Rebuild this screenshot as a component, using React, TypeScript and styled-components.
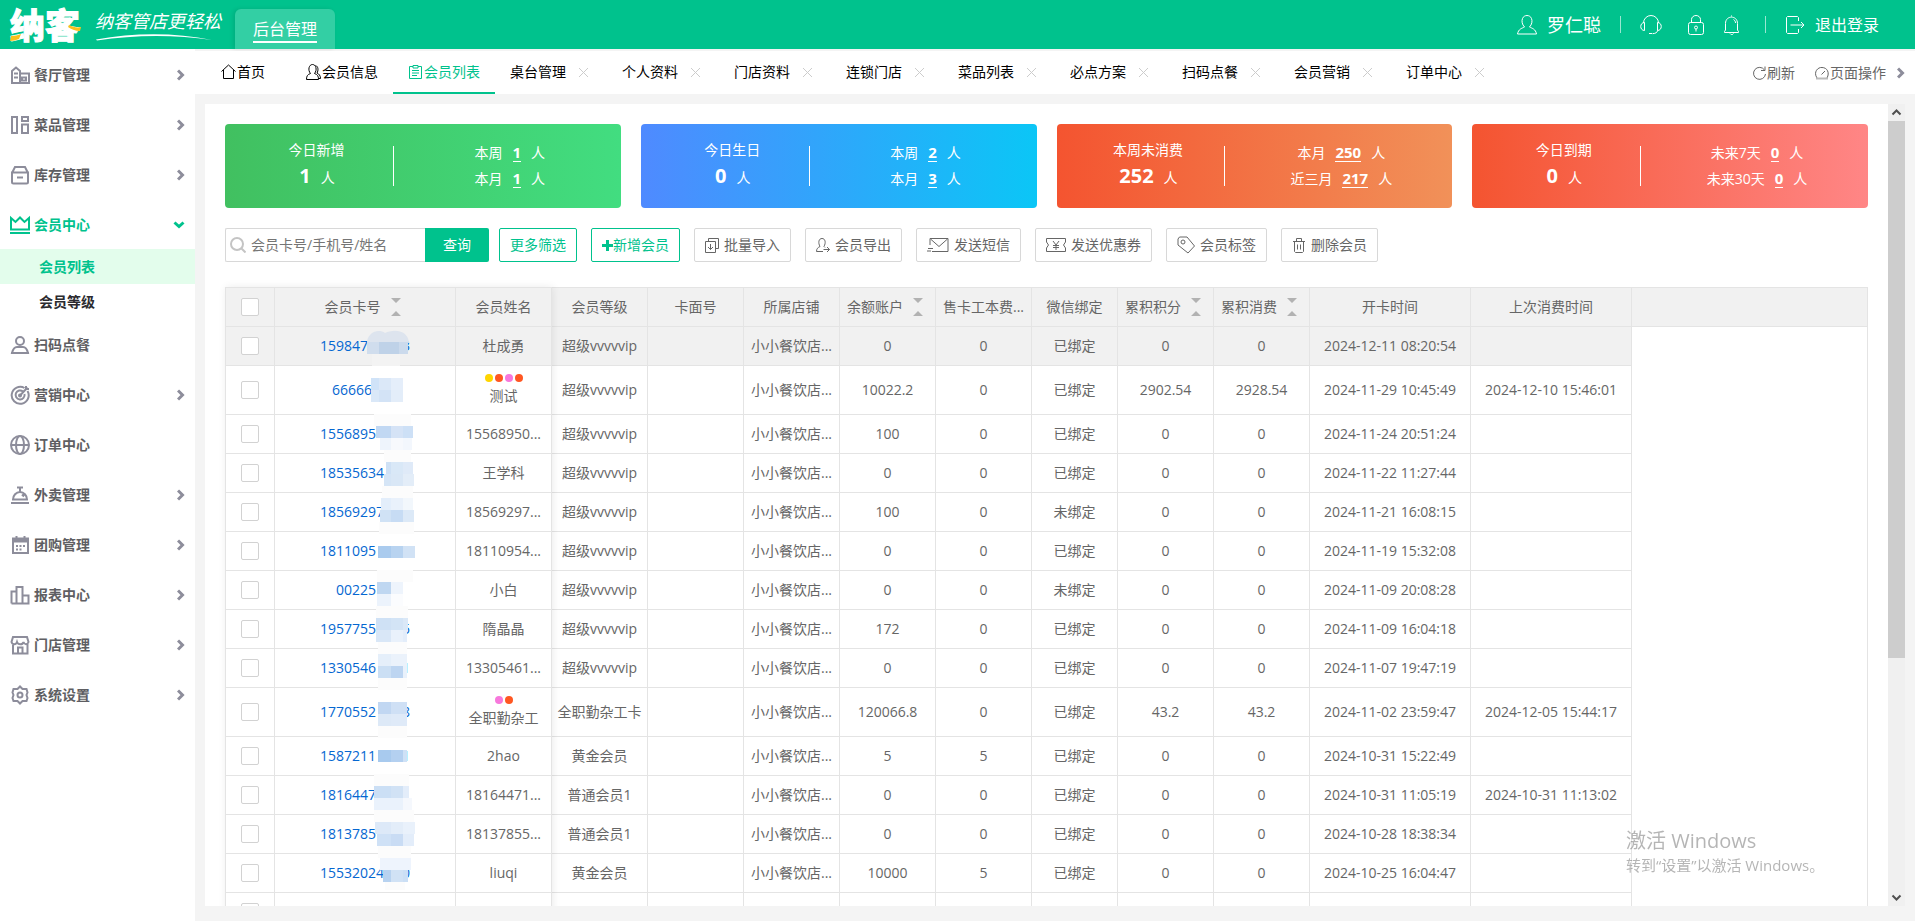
import React from "react";
import styled, { createGlobalStyle, css } from "styled-components";

const GREEN = "#00c28d";
const LINE = "#e4e4e4";

const GlobalStyle = createGlobalStyle`
  *, *::before, *::after { box-sizing: border-box; }
  body {
    margin: 0;
    background: #f4f4f4;
    color: #666;
    font: 14px/20px "Open Sans", "Noto Sans CJK SC", sans-serif;
  }
  button, input { font: inherit; color: inherit; }
  button { cursor: pointer; }
  a { color: inherit; text-decoration: none; }
`;

/* ---------- frame ---------- */

const Page = styled.div`
  display: flex;
  flex-direction: column;
  height: 100vh;
  overflow: hidden;
`;

const Header = styled.header`
  display: flex;
  flex: none;
  height: 49px;
  background: ${GREEN};
  color: #fff;
`;

const Body = styled.div`
  display: flex;
  flex: 1;
  min-height: 0;
`;

const Main = styled.main`
  display: flex;
  flex: 1;
  flex-direction: column;
  min-width: 0;
  padding: 2px 0 15px;
`;

/* ---------- header ---------- */

const Brand = styled.div`
  display: flex;
  align-items: center;
  width: 235px;
  padding-left: 10px;
`;

const LogoBox = styled.div`
  position: relative;
  width: 72px;
  height: 49px;
  font-size: 35px;
  font-weight: 900;
  line-height: 52px;
  white-space: nowrap;
  -webkit-text-stroke: 1px #fff;
  svg { position: absolute; left: 0; top: 0; }
`;

const Slogan = styled.div`
  display: flex;
  flex-direction: column;
  padding: 0 0 0 13px;
  font-size: 18px;
  font-style: italic;
  line-height: 24px;
`;

const HeaderTab = styled.button`
  align-self: flex-end;
  display: flex;
  justify-content: center;
  width: 100px;
  height: 40px;
  padding: 6px 0 0;
  border: 0;
  border-radius: 6px 6px 0 0;
  background: #33cfa4;
  box-shadow: -2px 0 4px rgba(0, 0, 0, 0.1);
  color: #fff;
  font-size: 16px;
  span {
    height: 28px;
    line-height: 28px;
    border-bottom: 2px solid #fff;
  }
`;

const HeaderTools = styled.div`
  display: flex;
  align-items: center;
  margin-left: auto;
  padding-right: 36px;
  svg { display: block; }
`;

const ToolLink = styled.a<{ $large?: boolean }>`
  display: flex;
  align-items: center;
  gap: 10px;
  font-size: ${(p) => (p.$large ? 18 : 16)}px;
`;

const IconGroup = styled.div`
  display: flex;
  align-items: center;
  gap: 20px;
  padding-right: 6px;
`;

const IconButton = styled.button`
  display: flex;
  padding: 0;
  border: 0;
  background: none;
  color: inherit;
`;

const Divider = styled.i`
  width: 1px;
  height: 17px;
  margin: 0 19px;
  background: rgba(255, 255, 255, 0.6);
`;

/* ---------- side menu ---------- */

const Sidebar = styled.nav`
  flex: none;
  width: 195px;
  background: #fff;
`;

const MenuItem = styled.a<{ $active?: boolean }>`
  display: flex;
  align-items: center;
  height: 50px;
  padding: 1px 10px 0;
  gap: 4px;
  font-weight: 700;
  color: ${(p) => (p.$active ? GREEN : "#5e5e62")};
  svg { flex: none; color: ${(p) => (p.$active ? GREEN : "#8d8d9b")}; }
  svg:last-child { margin-left: auto; }
`;

const SubItem = styled.a<{ $active?: boolean }>`
  display: flex;
  align-items: center;
  height: 35px;
  padding-left: 39px;
  font-weight: 700;
  background: ${(p) => (p.$active ? "#e3fdec" : "#fff")};
  color: ${(p) => (p.$active ? GREEN : "#2b2b2f")};
`;

/* ---------- tab bar ---------- */

const TabBar = styled.div`
  display: flex;
  flex: none;
  height: 43px;
  padding: 0 10px 0 11px;
  background: #fff;
`;

const Tab = styled.div<{ $active?: boolean; $home?: boolean }>`
  display: flex;
  align-items: center;
  padding: 0 15px;
  margin-right: ${(p) => (p.$home ? 11 : 0)}px;
  color: ${(p) => (p.$active ? GREEN : "#000")};
  border-bottom: 2px solid ${(p) => (p.$active ? GREEN : "transparent")};
  a { display: flex; align-items: center; gap: 1px; }
`;

const CloseButton = styled.button`
  display: flex;
  margin: 2px 3px 0 12px;
  padding: 0;
  border: 0;
  background: none;
  color: #ccc;
`;

const TabTools = styled.div`
  display: flex;
  align-items: center;
  gap: 20px;
  margin-left: auto;
`;

const TabTool = styled.button`
  display: flex;
  align-items: center;
  gap: 1px;
  padding: 0;
  border: 0;
  background: none;
  &:last-child { margin-left: -9px; color: #8d8d9b; }
`;

/* ---------- content ---------- */

const Content = styled.section`
  display: flex;
  flex: 1;
  min-height: 0;
  margin: 10px 10px 0;
  background: #fff;
`;

const ContentScroll = styled.div`
  flex: 1;
  min-width: 0;
  padding: 20px 20px 0;
  overflow: hidden;
`;

const ScrollRail = styled.div`
  display: flex;
  flex: none;
  flex-direction: column;
  width: 17px;
  background: #f0f0f0;
  color: #505050;
  svg { flex: none; display: block; }
`;

const ScrollSpace = styled.div`
  flex: 1;
`;

const ScrollThumb = styled.div`
  height: 67%;
  background: #cdcdcd;
`;

const Stats = styled.div`
  display: grid;
  grid-template-columns: repeat(4, 1fr);
  gap: 20px;
`;

const StatCard = styled.article<{ $from: string; $to: string }>`
  display: grid;
  grid-template-columns: 153fr 228fr;
  align-items: center;
  height: 84px;
  padding-left: 15px;
  border-radius: 4px;
  background: linear-gradient(90deg, ${(p) => p.$from}, ${(p) => p.$to});
  color: #fff;
  text-align: center;
`;

const StatMain = styled.div`
  height: 58px;
  line-height: 26px;
`;

const StatTotal = styled.div`
  padding-left: 1px;
  line-height: 26px;
  strong { margin-right: 10px; font-size: 20px; }
`;

const StatSide = styled.div`
  position: relative;
  padding-left: 6px;
  &::before {
    content: "";
    position: absolute;
    left: 0;
    top: 6px;
    width: 1px;
    height: 40px;
    background: #fff;
  }
`;

const StatLine = styled.div`
  display: flex;
  justify-content: center;
  align-items: center;
  gap: 10px;
  height: 26px;
  strong {
    height: 18px;
    border-bottom: 1px solid #fff;
    font-size: 15px;
    line-height: 16px;
  }
`;

const Toolbar = styled.div`
  display: flex;
  gap: 14px;
  margin: 20px 0 25px;
`;

const SearchForm = styled.form`
  display: flex;
  width: 264px;
  height: 34px;
  margin-right: -4px;
`;

const SearchBox = styled.label`
  display: flex;
  align-items: center;
  width: 200px;
  padding-left: 4px;
  gap: 5px;
  border: 1px solid #d8d8d8;
  border-right: 0;
  border-radius: 2px 0 0 2px;
  svg { flex: none; color: #c4c4c4; }
  input {
    min-width: 0;
    width: 100%;
    padding: 0;
    border: 0;
    outline: 0;
    background: none;
  }
  input::placeholder { color: #757575; }
`;

const SearchButton = styled.button`
  width: 64px;
  border: 0;
  border-radius: 0 2px 2px 0;
  background: ${GREEN};
  color: #fff;
`;

const ToolButton = styled.button<{ $accent?: boolean }>`
  display: flex;
  align-items: center;
  height: 34px;
  padding: 0 10px;
  gap: ${(p) => (p.$accent ? 0 : 5)}px;
  border: 1px solid ${(p) => (p.$accent ? GREEN : "#d8d8d8")};
  border-radius: 2px;
  background: #fff;
  color: ${(p) => (p.$accent ? GREEN : "#666")};
  white-space: nowrap;
`;

/* ---------- member table ---------- */

const TableFrame = styled.div`
  position: relative;
  border: solid ${LINE};
  border-width: 1px 0 0 1px;
`;

const PinnedShadow = styled.div`
  position: absolute;
  inset: -1px auto 0 -1px;
  width: 327px;
  box-shadow: 1px 0 8px rgba(0, 0, 0, 0.08);
  pointer-events: none;
`;

const Table = styled.table`
  width: 100%;
  table-layout: fixed;
  border-collapse: separate;
  border-spacing: 0;
  text-align: center;
`;

const cell = css`
  padding: 0;
  border: solid ${LINE};
  border-width: 0 1px 1px 0;
  white-space: nowrap;
`;

const Th = styled.th`
  ${cell}
  height: 39px;
  background: #f1f1f1;
  font-weight: 400;
`;

const HeadLabel = styled.div<{ $sortable?: boolean }>`
  display: flex;
  align-items: center;
  justify-content: center;
  gap: 10px;
  padding-right: ${(p) => (p.$sortable ? 5 : 0)}px;
`;

const Tr = styled.tr<{ $tall?: boolean; $hover?: boolean }>`
  height: ${(p) => (p.$tall ? 49 : 39)}px;
  td:not(:last-child) { background: ${(p) => (p.$hover ? "#f1f1f1" : "#fff")}; }
`;

const Td = styled.td`
  ${cell}
  position: relative;
`;

const RestTd = styled.td`
  padding: 0;
  border-right: 1px solid ${LINE};
`;

const CheckBox = styled.input`
  display: block;
  width: 18px;
  height: 18px;
  margin: 0 auto;
  appearance: none;
  border: 1px solid #d2d2d2;
  border-radius: 2px;
  background: #fff;
`;

const CardLink = styled.a<{ $digits: number }>`
  display: flex;
  justify-content: space-between;
  width: ${(p) => p.$digits * 8 + 2}px;
  margin: 0 auto;
  color: #0567d1;
`;

const Mosaic = styled.svg`
  position: absolute;
  left: 0;
  top: 0;
  z-index: 1;
  overflow: visible;
`;

const Tags = styled.div`
  display: flex;
  justify-content: center;
  gap: 2px;
  padding-bottom: 4px;
`;

const Tag = styled.i<{ $color: string }>`
  width: 8px;
  height: 8px;
  border-radius: 50%;
  background: ${(p) => p.$color};
`;

const Watermark = styled.div`
  position: fixed;
  right: 89px;
  bottom: 44px;
  z-index: 2;
  width: 200px;
  color: rgba(120, 120, 120, 0.55);
  font-size: 15px;
  line-height: 24px;
  white-space: nowrap;
  pointer-events: none;
  div:first-child { font-size: 20px; }
`;

/* ---------- icons ---------- */

type IconProps = { w: number; h?: number; box: string; sw?: number; children: React.ReactNode };

const Icon = ({ w, h = w, box, sw = 1, children }: IconProps) => (
  <svg width={w} height={h} viewBox={box} fill="none" stroke="currentColor" strokeWidth={sw} aria-hidden="true">
    {children}
  </svg>
);

const menuShapes: Record<string, React.ReactNode> = {
  building: <><path d="M2 18V6l4-3.500 4 3.500v12M1 18h18V8.500h-9M4 8.500h4M4 12.500h4" /><path d="M12 12.500h4v3h-4z" /></>,
  layout: <path d="M2 2h5v16H2zM12 2h6v4h-6zM12 9.500h6V18h-6z" />,
  box: <path d="M2 7.500h16V17a1.500 1.500 0 0 1-1.500 1.500h-13A1.500 1.500 0 0 1 2 17zM2.500 7L5 2h10l2.500 5M7 12.500h6" />,
  crown: <path d="M1 14.500V3l4.500 4L10 2.500 14.500 7 19 3v11.500zM0 18h20" />,
  user: <><circle cx="10" cy="6" r="4" /><path d="M2 18c1-4 3-6 5-6h6c2 0 4 2 5 6zM1 18h18" /></>,
  target: <><path d="M17.500 6A8.500 8.500 0 1 1 14.500 3" /><path d="M13 6.500A4.500 4.500 0 1 0 14.500 9M10 10.500l7.500-8M16 1v3h3" /><circle cx="10" cy="10.500" r="1" /></>,
  globe: <><circle cx="10" cy="10" r="9" /><ellipse cx="10" cy="10" rx="4" ry="9" /><path d="M1 10h18" /></>,
  dish: <path d="M3 14.500a7 7.500 0 0 1 14 0zM1 18h18M7 2.500h6M10 3v4M12 9.500l2 2" />,
  calendar: <><path d="M3 3.500h15V18H3zM3 6.500h15M3 5h15M6.500 1v3M14.500 1v3" /><path d="M6 11h2M9.500 11h2M13 11h2M6 14.500h2M9.500 14.500h2" /></>,
  chart: <path d="M1.500 18.500V6.500h5M6.500 18.500V2h6v16.500M12.500 10.500h6v8h-17" />,
  shop: <path d="M3 9v9.500h14.500V9M3 2h14l1.500 5c-1 3-4 3-5 0-.5 3-5.500 3-6.500 0-1 3-4.500 3-5.500 0zM8 18v-5.500h4.500V18" />,
  gear: <><path d="M7.500 4L10 1.500 12.500 4h4l1 3.500-1 2.500 1 3-1 3h-4L10 18.500 7.500 16h-4l-1-3 1-3-1-2.500 1-3.500z" /><circle cx="10" cy="10" r="2.500" /></>,
};

const MenuIcon = ({ name }: { name: string }) => <Icon w={20} box="0 0 20 20" sw={2}>{menuShapes[name]}</Icon>;
const Right = () => <Icon w={8} h={12} box="0 0 8 12" sw={3}><path d="M1 1.500L5.500 6 1 10.500" /></Icon>;
const Down = () => <Icon w={12} h={8} box="0 0 12 8" sw={3}><path d="M1.500 1.500L6 5.500l4.500-4" /></Icon>;

const SortMark = () => (
  <svg width="10" height="18" viewBox="0 0 10 18" fill="#b2b2b2" aria-hidden="true">
    <path d="M0 0h10L5 5zM0 18h10L5 13z" />
  </svg>
);

/* ---------- data ---------- */

const menuTop = [["building", "餐厅管理"], ["layout", "菜品管理"], ["box", "库存管理"]];
const menuRest: [string, string, boolean][] = [
  ["user", "扫码点餐", false], ["target", "营销中心", true], ["globe", "订单中心", false], ["dish", "外卖管理", true],
  ["calendar", "团购管理", true], ["chart", "报表中心", true], ["shop", "门店管理", true], ["gear", "系统设置", true],
];

const openTabs = ["桌台管理", "个人资料", "门店资料", "连锁门店", "菜品列表", "必点方案", "扫码点餐", "会员营销", "订单中心"];

const stats = [
  { from: "#41c060", to: "#42dd80", title: "今日新增", total: 1, lines: [["本周", 1], ["本月", 1]] },
  { from: "#4f8aff", to: "#0bc6f6", title: "今日生日", total: 0, lines: [["本周", 2], ["本月", 3]] },
  { from: "#f45430", to: "#f19159", title: "本周未消费", total: 252, lines: [["本月", 250], ["近三月", 217]] },
  { from: "#f45430", to: "#ff8686", title: "今日到期", total: 0, lines: [["未来7天", 0], ["未来30天", 0]] },
];

const tools: [string, React.ReactNode][] = [
  ["批量导入", <Icon w={14} h={15} box="0 0 14 15"><path d="M3.500 3V.5h10v10H11M.5 3.500h10v11H.5zM5.500 6v5.500M3 9l2.500 2.500L8 9" /></Icon>],
  ["会员导出", <Icon w={14} h={15} box="0 0 14 15"><path d="M7 13.500H.5c0-3 1.500-4 3.500-5C2 5 2.500.5 6 .5s4 4.500 2 8l1 1M7.500 11.500h6M11 9l2.500 2.500L11 14" /></Icon>],
  ["发送短信", <Icon w={22} h={16} box="0 0 22 16"><path d="M3 8V1.500h18v13H5M3.500 2L12 9.500 20.500 2M1 11.500h5M0 14h4" /></Icon>],
  ["发送优惠券", <Icon w={20} h={14} box="0 0 20 14"><path d="M.5.500h19V4l-2 3 2 3v3.500H.5V10l2-3-2-3zM7 3l3 4 3-4M10 7v5M7 7.500h6M7 9.500h6" /></Icon>],
  ["会员标签", <Icon w={18} h={18} box="0 0 18 18"><path d="M1 3l1.500-2h7.500l7.500 9-6.500 7L1 9z" /><circle cx="6" cy="6" r="2" /></Icon>],
  ["删除会员", <Icon w={14} h={15} box="0 0 14 15"><path d="M1 3.500h12M4.500 3V.5h5V3M2.500 4v9.500l1 1h7l1-1V4M5.500 6.500v5M8.500 6.500v5" /></Icon>],
];

const columns: [string, number, boolean?][] = [
  ["会员卡号", 181, true], ["会员姓名", 96], ["会员等级", 96], ["卡面号", 96], ["所属店铺", 96], ["余额账户", 96, true],
  ["售卡工本费...", 96], ["微信绑定", 86], ["累积积分", 96, true], ["累积消费", 96, true], ["开卡时间", 161], ["上次消费时间", 161],
];

type Block = [x: number, y: number, w: number, h: number, fill: string];
type Member = {
  card: string; tail?: string; digits?: number; name: string; tags?: string[]; level: string; balance: string;
  fee?: string; bound?: string; points?: string; spent?: string; opened: string; last?: string; blocks: Block[];
};

const VIP = "超级vvvvvip";
const PALE = "#fcfcfc";

const members: Member[] = [
  { card: "159847", tail: "3", name: "杜成勇", level: VIP, balance: "0", opened: "2024-12-11 08:20:54",
    blocks: [[97, 27, 28, 12, "#f3f3f3"], [92, 15, 12, 12, "#d0dded"], [104, 15, 20, 12, "#bfd2e8"], [124, 15, 9, 12, "#cbdaec"]] },
  { card: "66666", digits: 8, name: "测试", tags: ["#ffd500", "#ff5722", "#f778dc", "#ff5722"], level: VIP, balance: "10022.2",
    points: "2902.54", spent: "2928.54", opened: "2024-11-29 10:45:49", last: "2024-12-10 15:46:01",
    blocks: [[96, 12, 8, 12, "#d0e3f8"], [104, 12, 12, 12, "#dbe8f8"], [116, 12, 12, 12, "#e5eefa"], [96, 24, 8, 12, "#dae8f8"], [104, 24, 12, 12, "#d3e3f6"], [116, 24, 12, 12, "#e3edf9"], [99, 48, 37, 12, PALE]] },
  { card: "1556895", name: "15568950...", level: VIP, balance: "100", opened: "2024-11-24 20:51:24",
    blocks: [[101, 11, 15, 12, "#c1d8f3"], [116, 11, 12, 12, "#d5e3f6"], [128, 11, 10, 12, "#cde0f6"], [105, 23, 11, 12, "#eef4fc"], [116, 23, 12, 12, "#f7f9fd"], [128, 23, 9, 12, "#f3f7fd"], [109, 35, 27, 12, PALE]] },
  { card: "18535634", name: "王学科", level: VIP, balance: "0", opened: "2024-11-22 11:27:44",
    blocks: [[111, 8, 5, 12, "#cfe1f5"], [116, 8, 12, 12, "#d9e8f7"], [128, 8, 10, 12, "#dfeaf8"], [109, 20, 7, 12, "#d5e5f6"], [116, 20, 12, 12, "#d9e7f6"], [128, 20, 11, 12, "#e3edf8"], [107, 32, 31, 12, PALE]] },
  { card: "18569297", name: "18569297...", level: VIP, balance: "100", bound: "未绑定", opened: "2024-11-21 16:08:15",
    blocks: [[106, 5, 10, 12, "#e3eefb"], [116, 5, 12, 12, "#e9f1fb"], [128, 5, 10, 12, "#f2f7fc"], [105, 17, 11, 12, "#d0e2f5"], [116, 17, 12, 12, "#c7dcf4"], [128, 17, 11, 12, "#dce9f7"], [104, 29, 35, 12, PALE]] },
  { card: "1811095", name: "18110954...", level: VIP, balance: "0", opened: "2024-11-19 15:32:08",
    blocks: [[103, 14, 13, 12, "#aacbee"], [116, 14, 12, 12, "#b8d3f0"], [128, 14, 12, 12, "#d1e2f5"], [102, 38, 36, 12, PALE]] },
  { card: "00225", digits: 7, name: "小白", level: VIP, balance: "0", bound: "未绑定", opened: "2024-11-09 20:08:28",
    blocks: [[102, 11, 14, 12, "#bfd7f1"], [116, 11, 12, 12, "#eef4fc"], [102, 23, 14, 12, "#ecf3fc"], [116, 23, 12, 12, "#fbfcfe"], [101, 35, 32, 12, PALE]] },
  { card: "1957755", tail: "5", name: "隋晶晶", level: VIP, balance: "172", opened: "2024-11-09 16:04:18",
    blocks: [[101, 8, 15, 12, "#cfe1f5"], [116, 8, 12, 12, "#d3e4f6"], [128, 8, 5, 12, "#dae8f7"], [101, 20, 15, 12, "#d9e7f7"], [116, 20, 12, 12, "#e9f1fb"], [128, 20, 4, 12, "#e3edfa"], [103, 32, 29, 12, PALE]] },
  { card: "1330546", tail: "1", name: "13305461...", level: VIP, balance: "0", opened: "2024-11-07 19:47:19",
    blocks: [[103, 5, 13, 12, "#e5effa"], [116, 5, 16, 12, "#ebf2fb"], [103, 17, 13, 12, "#cbdff4"], [116, 17, 12, 12, "#bdd5f1"], [128, 17, 4, 12, "#e9f1fb"], [103, 29, 29, 12, PALE]] },
  { card: "1770552", tail: "8", name: "全职勤杂工", tags: ["#f778dc", "#ff5722"], level: "全职勤杂工卡", balance: "120066.8",
    points: "43.2", spent: "43.2", opened: "2024-11-02 23:59:47", last: "2024-12-05 15:44:17",
    blocks: [[103, 14, 13, 12, "#c1d7f2"], [116, 14, 16, 12, "#cfe0f5"], [103, 26, 13, 12, "#dde9f7"], [116, 26, 16, 12, "#dfeaf8"], [103, 38, 29, 12, PALE]] },
  { card: "1587211", tail: "1", name: "2hao", level: "黄金会员", balance: "5", fee: "5", opened: "2024-10-31 15:22:49",
    blocks: [[103, 13, 13, 12, "#a8caee"], [116, 13, 12, 12, "#b4d0f0"], [128, 13, 4, 12, "#cfe1f6"], [99, 37, 35, 12, PALE]] },
  { card: "1816447", name: "18164471...", level: "普通会员1", balance: "0", opened: "2024-10-31 11:05:19", last: "2024-10-31 11:13:02",
    blocks: [[99, 10, 17, 12, "#cbdff5"], [116, 10, 12, 12, "#d1e2f5"], [128, 10, 6, 12, "#e3edfa"], [99, 22, 29, 12, "#eaf2fc"], [128, 22, 9, 12, "#f5f8fd"], [99, 34, 40, 12, PALE]] },
  { card: "1813785", name: "18137855...", level: "普通会员1", balance: "0", opened: "2024-10-28 18:38:34",
    blocks: [[100, 7, 16, 12, "#dde9f8"], [116, 7, 12, 12, "#e3edf9"], [128, 7, 12, 12, "#e9f1fb"], [102, 19, 14, 12, "#cfe1f6"], [116, 19, 12, 12, "#c9dcf4"], [128, 19, 11, 12, "#e3edfa"], [103, 31, 33, 12, PALE]] },
  { card: "15532024", tail: "0", name: "liuqi", level: "黄金会员", balance: "10000", fee: "5", opened: "2024-10-25 16:04:47",
    blocks: [[105, 4, 31, 12, "#eef4fd"], [108, 16, 8, 12, "#b7d2f0"], [116, 16, 12, 12, "#d1e2f5"], [128, 16, 5, 12, "#cbdff5"], [110, 28, 20, 8, PALE]] },
];

/* ---------- parts ---------- */

const TopHeader = () => (
  <Header>
    <Brand>
      <LogoBox>
        纳客
        <svg width="72" height="49" viewBox="0 0 72 49" fill="#f9c11c" aria-hidden="true">
          <path d="M1 36c4 0 7-1 10-2l-2 5c-3 1-6 2-9 2zM59 25c4 2 8 3 12 2l-1 4c-5 0-9-2-12-4z" />
        </svg>
      </LogoBox>
      <Slogan>
        纳客管店更轻松
        <svg width="118" height="8" viewBox="0 0 118 8" fill="#fff" aria-hidden="true">
          <path d="M1 6.500C40-.5 80-.5 117 7 80 1.500 40 1.500 2 7.500z" />
        </svg>
      </Slogan>
    </Brand>
    <HeaderTab type="button"><span>后台管理</span></HeaderTab>
    <HeaderTools>
      <ToolLink href="#user" $large>
        <Icon w={20} box="0 0 20 20"><path d="M7.500 12C5 9.500 4.500 6 5.500 3.500c1.500-4 7.500-4 9 0 1 2.500.5 6-2 8.500 3 1.500 6 2 7 7H.5c1-5 4-5.500 7-7" /></Icon>
        罗仁聪
      </ToolLink>
      <Divider />
      <IconGroup>
        <IconButton type="button" aria-label="客服">
          <Icon w={22} h={20} box="0 0 22 20"><path d="M3.500 8a7.500 7.500 0 0 1 15 0M4.500 7.500v8c-5 0-5-8 0-8zM17.500 7.500v8c5 0 5-8 0-8zM17.500 15.500c0 2-2 3-5 3.200M9 18.500h3" /></Icon>
        </IconButton>
        <IconButton type="button" aria-label="锁屏">
          <Icon w={22} h={20} box="0 0 22 20"><rect x="6.500" y="7.500" width="15" height="12" rx="2" /><path d="M9.500 7V4.500a4.500 4 0 0 1 9 0V7M14 14v2.500" /><circle cx="14" cy="12.500" r="1.500" /></Icon>
        </IconButton>
        <IconButton type="button" aria-label="消息">
          <Icon w={16} h={20} box="0 0 16 20"><path d="M.5 17.500v-1l1-1.500V8.500C1.500 0 13.500 0 13.500 8.500V15l1 1.500v1zM6 18.500c1 1.500 2.500 1.500 3.500 0M7.500.5v1M9.500 4.500c1.500 1 2 2 2 3.500" /></Icon>
        </IconButton>
      </IconGroup>
      <Divider />
      <ToolLink href="#logout">
        <Icon w={20} box="0 0 20 20"><path d="M13.500 6V2.500l-1-1h-10l-1 1v15l1 1h10l1-1V14M5.500 10H19M16 7l3 3-3 3" /></Icon>
        退出登录
      </ToolLink>
    </HeaderTools>
  </Header>
);

const SideMenu = () => (
  <Sidebar>
    {menuTop.map(([icon, label]) => (
      <MenuItem href="#menu" key={label}><MenuIcon name={icon} />{label}<Right /></MenuItem>
    ))}
    <MenuItem href="#menu" $active><MenuIcon name="crown" />会员中心<Down /></MenuItem>
    <SubItem href="#list" $active>会员列表</SubItem>
    <SubItem href="#level">会员等级</SubItem>
    {menuRest.map(([icon, label, more]) => (
      <MenuItem href="#menu" key={label}>
        <MenuIcon name={icon} /><span>{label}</span>{more && <Right />}
      </MenuItem>
    ))}
  </Sidebar>
);

const Tabs = () => (
  <TabBar>
    <Tab $home>
      <a href="#home"><Icon w={15} box="0 0 15 15"><path d="M.5 7.500l7-6.500 7 6.500M2.500 6v8.500h10V6" /></Icon>首页</a>
    </Tab>
    <Tab>
      <a href="#info"><Icon w={15} h={16} box="0 0 15 16"><path d="M4.500 9.500C1.500 6 3 .5 6.500.5s5 5.500 2 9c3 1 4 2.500 4 6H.5c0-3.500 1-5 4-6M9.500 1.500c3 1 3 5 1.500 7.500 2 1 3.500 2.500 3.500 5.500h-2" /></Icon>会员信息</a>
    </Tab>
    <Tab $active>
      <a href="#list"><Icon w={15} h={16} box="0 0 15 16"><path d="M5 2.500H1.500v12h12v-12H10M5 1.500h5v2.500H5zM4 6.500h7M4 9h7M4 11.500h5" /></Icon>会员列表</a>
    </Tab>
    {openTabs.map((label) => (
      <Tab key={label}>
        <a href="#tab">{label}</a>
        <CloseButton type="button" aria-label={`关闭${label}`}>
          <Icon w={11} box="0 0 11 11"><path d="M1 1l9 9M10 1l-9 9" /></Icon>
        </CloseButton>
      </Tab>
    ))}
    <TabTools>
      <TabTool type="button"><Icon w={13} h={14} box="0 0 13 14"><path d="M11.500 4A6 6 0 1 0 12.500 8M12 .5V4.500H8" /></Icon>刷新</TabTool>
      <TabTool type="button"><Icon w={14} h={14} box="0 0 14 14"><path d="M2 12C-2 6 3 1 7 1.500c5 0 8 5 5 10.500M6.500 8.500L10 5" /><path d="M1 12.500h12" strokeWidth="2" stroke="#bbb" /></Icon>页面操作</TabTool>
      <TabTool type="button" aria-label="更多"><Right /></TabTool>
    </TabTools>
  </TabBar>
);

const Row = ({ m, hover }: { m: Member; hover: boolean }) => (
  <Tr $tall={!!m.tags} $hover={hover}>
    <Td><CheckBox type="checkbox" aria-label={`选择${m.name}`} /></Td>
    <Td>
      <CardLink href="#member" $digits={m.digits ?? 11}><span>{m.card}</span><span>{m.tail}</span></CardLink>
      <Mosaic width="180" height="38" aria-hidden="true">
        {hover && <path d="M92 16c0-10 11-15 18-10 8-4 23-4 24 10z" fill="#dde4ee" />}
        {m.blocks.map(([x, y, w, h, fill], i) => (
          <rect key={i} x={x} y={y} width={w} height={h} fill={fill} />
        ))}
      </Mosaic>
    </Td>
    <Td>
      {m.tags && <Tags>{m.tags.map((c, i) => <Tag key={i} $color={c} />)}</Tags>}
      {m.name}
    </Td>
    <Td>{m.level}</Td>
    <Td />
    <Td>小小餐饮店...</Td>
    <Td>{m.balance}</Td>
    <Td>{m.fee ?? "0"}</Td>
    <Td>{m.bound ?? "已绑定"}</Td>
    <Td>{m.points ?? "0"}</Td>
    <Td>{m.spent ?? "0"}</Td>
    <Td>{m.opened}</Td>
    <Td>{m.last}</Td>
    <RestTd />
  </Tr>
);

const MemberTable = () => (
  <TableFrame>
    <Table>
      <colgroup>
        <col style={{ width: 49 }} />
        {columns.map(([label, width]) => <col key={label} style={{ width }} />)}
        <col />
      </colgroup>
      <thead>
        <tr>
          <Th><CheckBox type="checkbox" aria-label="全选" /></Th>
          {columns.map(([label, , sortable]) => (
            <Th key={label}><HeadLabel $sortable={sortable}>{label}{sortable && <SortMark />}</HeadLabel></Th>
          ))}
          <Th />
        </tr>
      </thead>
      <tbody>
        {members.map((m, i) => <Row key={m.opened} m={m} hover={i === 0} />)}
        <Tr>
          <Td><CheckBox type="checkbox" aria-label="选择会员" /></Td>
          {columns.map(([label]) => <Td key={label} />)}
          <RestTd />
        </Tr>
      </tbody>
    </Table>
    <PinnedShadow />
  </TableFrame>
);

export default function App() {
  return (
    <>
      <GlobalStyle />
      <Page>
        <TopHeader />
        <Body>
          <SideMenu />
          <Main>
            <Tabs />
            <Content>
              <ContentScroll>
                <Stats>
                  {stats.map((s) => (
                    <StatCard key={s.title} $from={s.from} $to={s.to}>
                      <StatMain>
                        {s.title}
                        <StatTotal><strong>{s.total}</strong>人</StatTotal>
                      </StatMain>
                      <StatSide>
                        {s.lines.map(([label, n]) => (
                          <StatLine key={label}><span>{label}</span><strong>{n}</strong><span>人</span></StatLine>
                        ))}
                      </StatSide>
                    </StatCard>
                  ))}
                </Stats>
                <Toolbar>
                  <SearchForm onSubmit={(e) => e.preventDefault()}>
                    <SearchBox>
                      <Icon w={16} box="0 0 16 16" sw={2}><circle cx="7" cy="7" r="6" /><path d="M11.500 11.500L15.500 15.500" /></Icon>
                      <input type="text" aria-label="搜索会员" placeholder="会员卡号/手机号/姓名" />
                    </SearchBox>
                    <SearchButton type="submit">查询</SearchButton>
                  </SearchForm>
                  <ToolButton type="button" $accent>更多筛选</ToolButton>
                  <ToolButton type="button" $accent>
                    <Icon w={11} box="0 0 11 11" sw={3}><path d="M5.500 0v11M0 5.500h11" /></Icon>新增会员
                  </ToolButton>
                  {tools.map(([label, icon]) => (
                    <ToolButton type="button" key={label}>{icon}{label}</ToolButton>
                  ))}
                </Toolbar>
                <MemberTable />
              </ContentScroll>
              <ScrollRail aria-hidden="true">
                <Icon w={17} box="0 0 17 17" sw={2}><path d="M4.500 10.500l4-4 4 4" /></Icon>
                <ScrollThumb />
                <ScrollSpace />
                <Icon w={17} box="0 0 17 17" sw={2}><path d="M4.500 6.500l4 4 4-4" /></Icon>
              </ScrollRail>
            </Content>
          </Main>
        </Body>
      </Page>
      <Watermark>
        <div>激活 Windows</div>
        <div>转到“设置”以激活 Windows。</div>
      </Watermark>
    </>
  );
}
